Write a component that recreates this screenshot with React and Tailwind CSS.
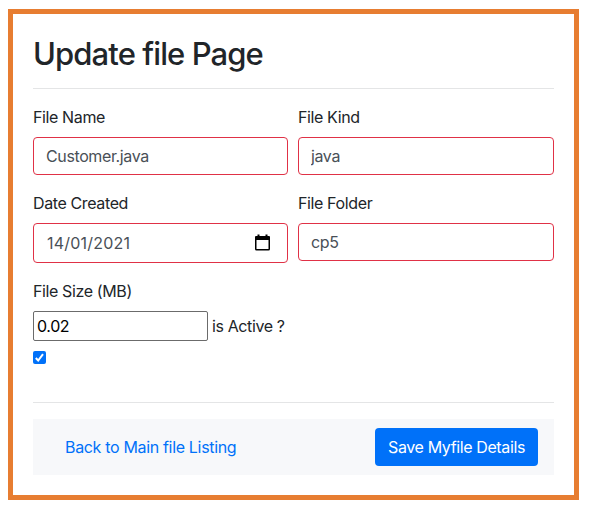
function Field({ label, children }) {
  return (
    <div className="flex flex-col">
      <label className="mb-2">{label}</label>
      {children}
    </div>
  );
}

const control =
  "w-full rounded-[4px] border border-[#e03146] bg-white px-3 text-[#495057] outline-none";

function CalendarIcon() {
  return (
    <svg width="17" height="18" viewBox="0 0 17 18" fill="none">
      <path d="M3.500 0.500h2v1.500h6v-1.500h2v1.500H15a1 1 0 0 1 1 1V15a1.500 1.500 0 0 1-1.500 1.500h-12A1.500 1.500 0 0 1 1 15V3a1 1 0 0 1 1-1h1.500zM2.500 6v9h12V6z" fill="#000" fillRule="evenodd" />
    </svg>
  );
}

function CheckBox() {
  return (
    <span role="checkbox" aria-checked="true" className="flex size-[13px] rounded-[2px] bg-[#0071f9]">
      <svg width="13" height="13" viewBox="0 0 13 13" fill="none">
        <path d="M2.800 7l2.400 2.500 4.800-6.300" stroke="#fff" strokeWidth="2" />
      </svg>
    </span>
  );
}

export default function App() {
  return (
    <div className="h-[514px] w-[593px] bg-white pt-[9px] pl-2 font-['Inter',sans-serif] text-base leading-6 tracking-[-0.38px] text-[#212529]">
      <main className="h-[491px] w-[571px] border-5 border-[#e77d31] px-5 pt-5">
        <h1 className="h-[54px] text-[31px] leading-[39px] font-medium tracking-[-0.9px]">Update file Page</h1>
        <hr className="mb-4 border-[#e4e5e6]" />
        <form>
          <div className="grid grid-cols-[255px_256px] gap-x-2.5 gap-y-4">
            <Field label="File Name">
              <input className={control + " h-[38px]"} defaultValue="Customer.java" />
            </Field>
            <Field label="File Kind">
              <input className={control + " h-[38px]"} defaultValue="java" />
            </Field>
            <Field label="Date Created">
              <div className={control + " flex h-10 items-center justify-between pr-4"}>
                <span className="pl-px tracking-[0.22px]">14/01/2021</span>
                <CalendarIcon />
              </div>
            </Field>
            <Field label="File Folder">
              <input className={control + " h-[38px]"} defaultValue="cp5" />
            </Field>
          </div>
          <div className="mt-4 mb-2">File Size (MB)</div>
          <div className="flex items-center gap-1">
            <input className="h-[30px] w-[175px] rounded-[2px] border border-[#6b6b6b] px-[3px] text-black outline-none" defaultValue="0.02" />
            <label>is Active ?</label>
          </div>
          <div className="mt-2.5 mb-[38px]">
            <CheckBox />
          </div>
          <hr className="mb-4 border-[#e4e5e6]" />
          <footer className="flex h-14 items-center justify-between bg-[#f7f8fa] pr-4 pl-8">
            <a href="#" className="tracking-[-0.33px] text-[#0071f9]">Back to Main file Listing</a>
            <button type="button" className="h-[38px] w-[163px] rounded-[4px] bg-[#0071f9] whitespace-nowrap text-white">Save Myfile Details</button>
          </footer>
        </form>
      </main>
    </div>
  );
}
